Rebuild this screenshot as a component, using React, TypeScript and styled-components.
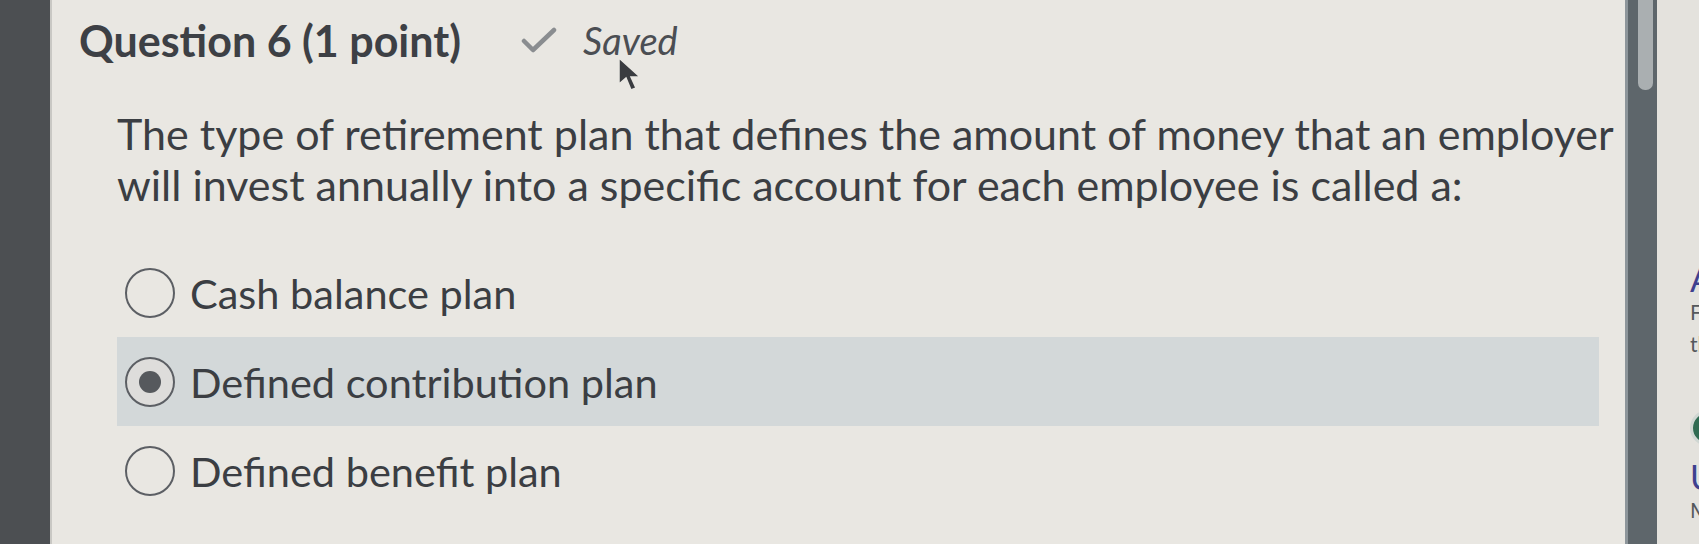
import React from "react";
import styled, { createGlobalStyle } from "styled-components";

const Global = createGlobalStyle`
  html, body { margin: 0; padding: 0; }
  body {
    width: 1699px;
    height: 544px;
    overflow: hidden;
    font-family: Lato, "Open Sans", sans-serif;
    background: #e6e4df;
  }
`;

const Screen = styled.div`
  position: relative;
  display: flex;
  width: 1699px;
  height: 544px;
  overflow: hidden;
`;

const LeftBar = styled.div`
  width: 50px;
  flex-shrink: 0;
  background: #4c4f52;
  border-right: 2px solid #c9c8c4;
`;

const Main = styled.div`
  width: 1573px;
  flex-shrink: 0;
  background: #e9e7e2;
  padding: 12px 0 0 27px;
  box-sizing: border-box;
  display: flex;
  flex-direction: column;
`;

const Header = styled.div`
  display: flex;
  align-items: center;
  height: 56px;
`;

const Title = styled.h2`
  margin: 0;
  font-size: 43px;
  font-weight: 700;
  color: #3d4045;
`;

const SavedBox = styled.div`
  display: flex;
  align-items: center;
  margin-left: 60px;
  gap: 26px;
`;

const SavedText = styled.span`
  font-style: italic;
  font-size: 38px;
  color: #4b4e53;
`;

const Body = styled.div`
  padding-left: 38px;
  margin-top: 40px;
`;

const Prompt = styled.p`
  margin: 0;
  font-size: 43px;
  line-height: 51px;
  color: #3b3e43;
  width: 1520px;
`;

const Options = styled.div`
  margin-top: 38px;
  margin-right: 26px;
  display: flex;
  flex-direction: column;
`;

const Option = styled.label<{ $selected?: boolean }>`
  display: flex;
  align-items: center;
  gap: 15px;
  height: 89px;
  padding-left: 8px;
  background: ${(p) => (p.$selected ? "#d3d8d9" : "transparent")};
  font-size: 41.5px;
  color: #3b3e43;
`;

const Radio = styled.span<{ $checked?: boolean }>`
  width: 50px;
  height: 50px;
  box-sizing: border-box;
  border: 2.5px solid #5c5f64;
  border-radius: 50%;
  display: flex;
  align-items: center;
  justify-content: center;
  background: ${(p) => (p.$checked ? "#dedddb" : "#e9e7e2")};
  flex-shrink: 0;
  &::after {
    content: "";
    display: ${(p) => (p.$checked ? "block" : "none")};
    width: 22px;
    height: 22px;
    border-radius: 50%;
    background: #56595d;
  }
`;

const ScrollTrack = styled.div`
  width: 32px;
  flex-shrink: 0;
  background: #5e666b;
  border-left: 3px solid #8d959a;
  padding: 0 4px 0 10px;
  box-sizing: border-box;
`;

const ScrollThumb = styled.div`
  height: 90px;
  background: #aaafb1;
  border-radius: 0 0 7px 7px;
`;

const Side = styled.div`
  flex: 1;
  background: #e4e2dd;
  padding-left: 33px;
  padding-top: 262px;
  overflow: hidden;
  white-space: nowrap;
  font-size: 21px;
  color: #55585c;
  display: flex;
  flex-direction: column;
`;

const SideHead = styled.span<{ $mt?: number }>`
  color: #3f408f;
  font-size: 34px;
  line-height: 34px;
  margin-top: ${(p) => p.$mt ?? 0}px;
`;

const SideLine = styled.span`
  line-height: 32px;
`;

const SideBadge = styled.span`
  display: block;
  width: 30px;
  height: 30px;
  margin-top: 50px;
  border-radius: 50%;
  background: #2f6b52;
  border: 3px solid #cfd6d2;
`;

const CursorSvg = styled.svg`
  position: absolute;
  left: 616px;
  top: 56px;
`;

const Cursor = () => (
  <CursorSvg width="28" height="38" viewBox="0 0 28 38">
    <path d="M3 2 L3 28 L10 22 L15 34 L20 32 L15 21 L24 21 Z" fill="#3a3c40" stroke="#e9e7e2" strokeWidth="1.5" />
  </CursorSvg>
);

const Check = () => (
  <svg width="36" height="26" viewBox="0 0 36 26">
    <path d="M3 14 L12 23 L33 3" fill="none" stroke="#8a8d90" strokeWidth="4.5" strokeLinecap="round" strokeLinejoin="round" />
  </svg>
);

const options = [
  { label: "Cash balance plan", selected: false },
  { label: "Defined contribution plan", selected: true },
  { label: "Defined benefit plan", selected: false },
];

export default function App() {
  return (
    <>
      <Global />
      <Screen>
        <LeftBar />
        <Main>
          <Header>
            <Title>Question 6 (1 point)</Title>
            <SavedBox>
              <Check />
              <SavedText>Saved</SavedText>
            </SavedBox>
          </Header>
          <Body>
            <Prompt>
              The type of retirement plan that defines the amount of money that an employer will invest annually
              into a specific account for each employee is called a:
            </Prompt>
            <Options>
              {options.map((o) => (
                <Option key={o.label} $selected={o.selected}>
                  <Radio $checked={o.selected} />
                  {o.label}
                </Option>
              ))}
            </Options>
          </Body>
        </Main>
        <ScrollTrack>
          <ScrollThumb />
        </ScrollTrack>
        <Side>
          <SideHead>A</SideHead>
          <SideLine>F</SideLine>
          <SideLine>tl</SideLine>
          <SideBadge />
          <SideHead $mt={14}>U</SideHead>
          <SideLine>M</SideLine>
        </Side>
        <Cursor />
      </Screen>
    </>
  );
}
